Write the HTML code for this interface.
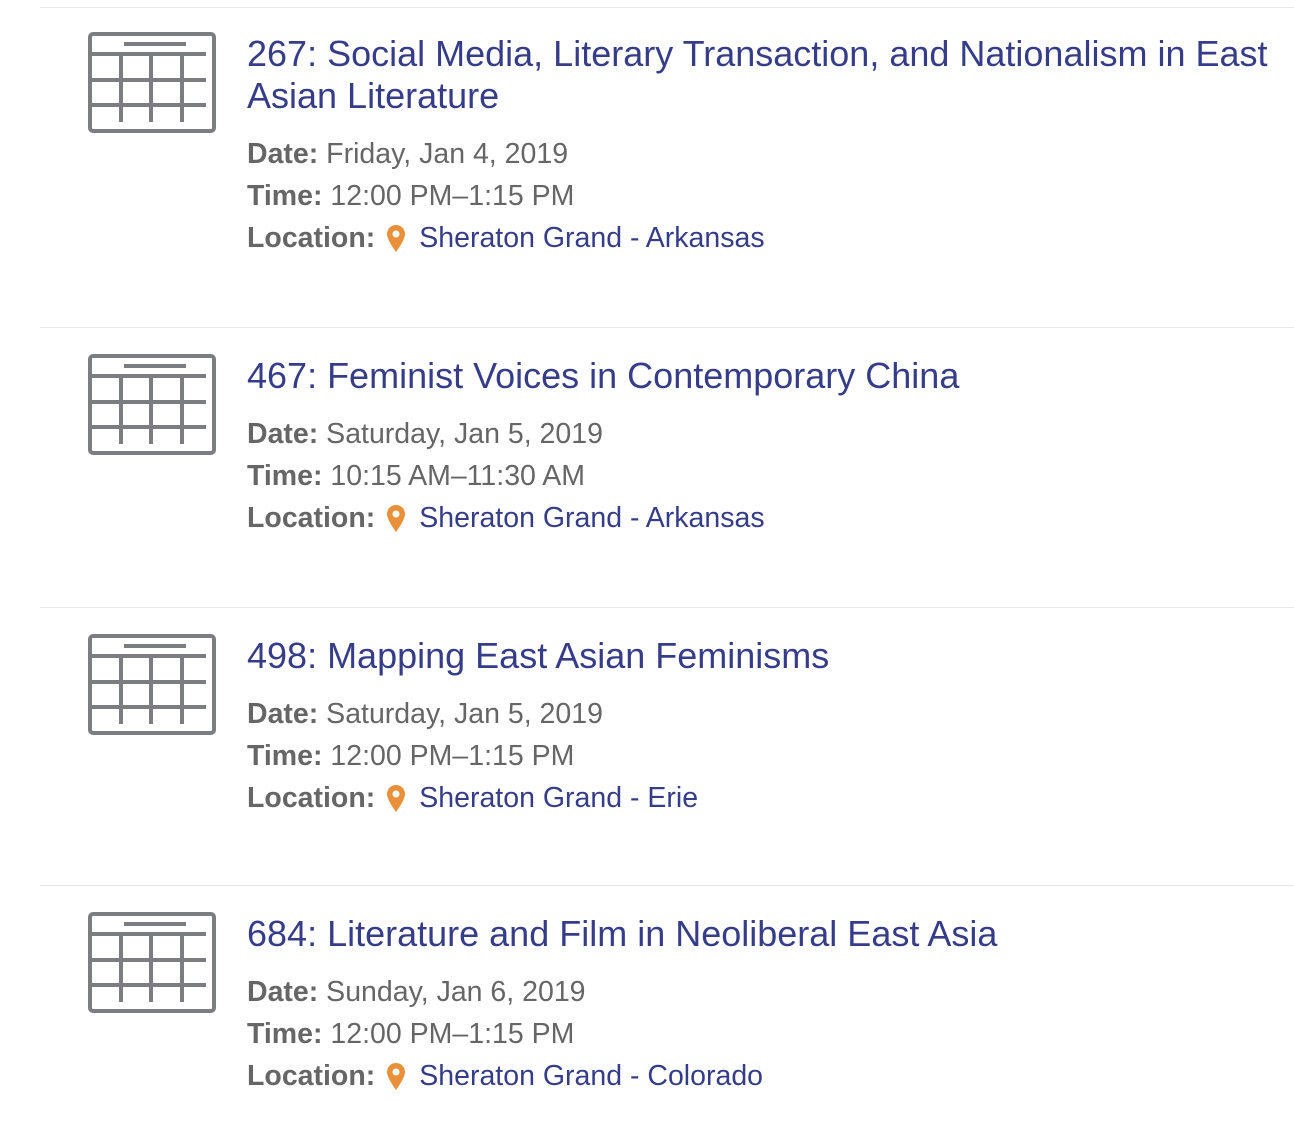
<!DOCTYPE html>
<html><head><style>
body{margin:0;width:1294px;height:1138px;background:#fff;position:relative;font-family:"Liberation Sans",sans-serif;overflow:hidden}
.sep{position:absolute;left:40px;right:0;height:1px;background:#e6e6e6}
.ic{position:absolute;left:88px;width:128px;height:101px}
.t{position:absolute;left:247px;font-size:36px;line-height:42px;color:#363d88;white-space:nowrap}
.d{position:absolute;left:247px;font-size:28.5px;line-height:42px;color:#666;white-space:nowrap}
.d b{color:#666}
.loc{color:#363d88}
.pin{display:inline-block;vertical-align:-5px;margin:0 14px 0 12px}
</style></head><body>
<svg width="0" height="0" style="position:absolute"><defs>
<g id="cal" fill="none" stroke="#7b7d80" stroke-width="4">
<rect x="2" y="2" width="124" height="97" rx="3"/>
<line x1="36" y1="12" x2="98" y2="12"/>
<line x1="2" y1="22" x2="118" y2="22"/>
<line x1="2" y1="48" x2="118" y2="48"/>
<line x1="2" y1="73" x2="118" y2="73"/>
<line x1="33" y1="22" x2="33" y2="90"/>
<line x1="63" y1="22" x2="63" y2="90"/>
<line x1="94" y1="22" x2="94" y2="90"/>
</g>
<g id="pn"><path d="M9 0C4 0 0 4 0 9c0 6 9 18 9 18s9-12 9-18C18 4 14 0 9 0z" fill="#e8913a"/><circle cx="9" cy="9" r="3.5" fill="#fff"/></g>
</defs></svg>

<div class="sep" style="top:7px"></div>
<svg class="ic" style="top:32px"><use href="#cal"/></svg>
<div class="t" style="top:33px">267: Social Media, Literary Transaction, and Nationalism in East<br>Asian Literature</div>
<div class="d" style="top:133px"><b>Date:</b> Friday, Jan 4, 2019</div>
<div class="d" style="top:175px"><b>Time:</b> 12:00 PM–1:15 PM</div>
<div class="d" style="top:217px"><b>Location:</b><svg class="pin" width="18" height="27"><use href="#pn"/></svg><span class="loc">Sheraton Grand - Arkansas</span></div>

<div class="sep" style="top:327px"></div>
<svg class="ic" style="top:354px"><use href="#cal"/></svg>
<div class="t" style="top:355px">467: Feminist Voices in Contemporary China</div>
<div class="d" style="top:413px"><b>Date:</b> Saturday, Jan 5, 2019</div>
<div class="d" style="top:455px"><b>Time:</b> 10:15 AM–11:30 AM</div>
<div class="d" style="top:497px"><b>Location:</b><svg class="pin" width="18" height="27"><use href="#pn"/></svg><span class="loc">Sheraton Grand - Arkansas</span></div>

<div class="sep" style="top:607px"></div>
<svg class="ic" style="top:634px"><use href="#cal"/></svg>
<div class="t" style="top:635px">498: Mapping East Asian Feminisms</div>
<div class="d" style="top:693px"><b>Date:</b> Saturday, Jan 5, 2019</div>
<div class="d" style="top:735px"><b>Time:</b> 12:00 PM–1:15 PM</div>
<div class="d" style="top:777px"><b>Location:</b><svg class="pin" width="18" height="27"><use href="#pn"/></svg><span class="loc">Sheraton Grand - Erie</span></div>

<div class="sep" style="top:885px"></div>
<svg class="ic" style="top:912px"><use href="#cal"/></svg>
<div class="t" style="top:913px">684: Literature and Film in Neoliberal East Asia</div>
<div class="d" style="top:971px"><b>Date:</b> Sunday, Jan 6, 2019</div>
<div class="d" style="top:1013px"><b>Time:</b> 12:00 PM–1:15 PM</div>
<div class="d" style="top:1055px"><b>Location:</b><svg class="pin" width="18" height="27"><use href="#pn"/></svg><span class="loc">Sheraton Grand - Colorado</span></div>
</body></html>
